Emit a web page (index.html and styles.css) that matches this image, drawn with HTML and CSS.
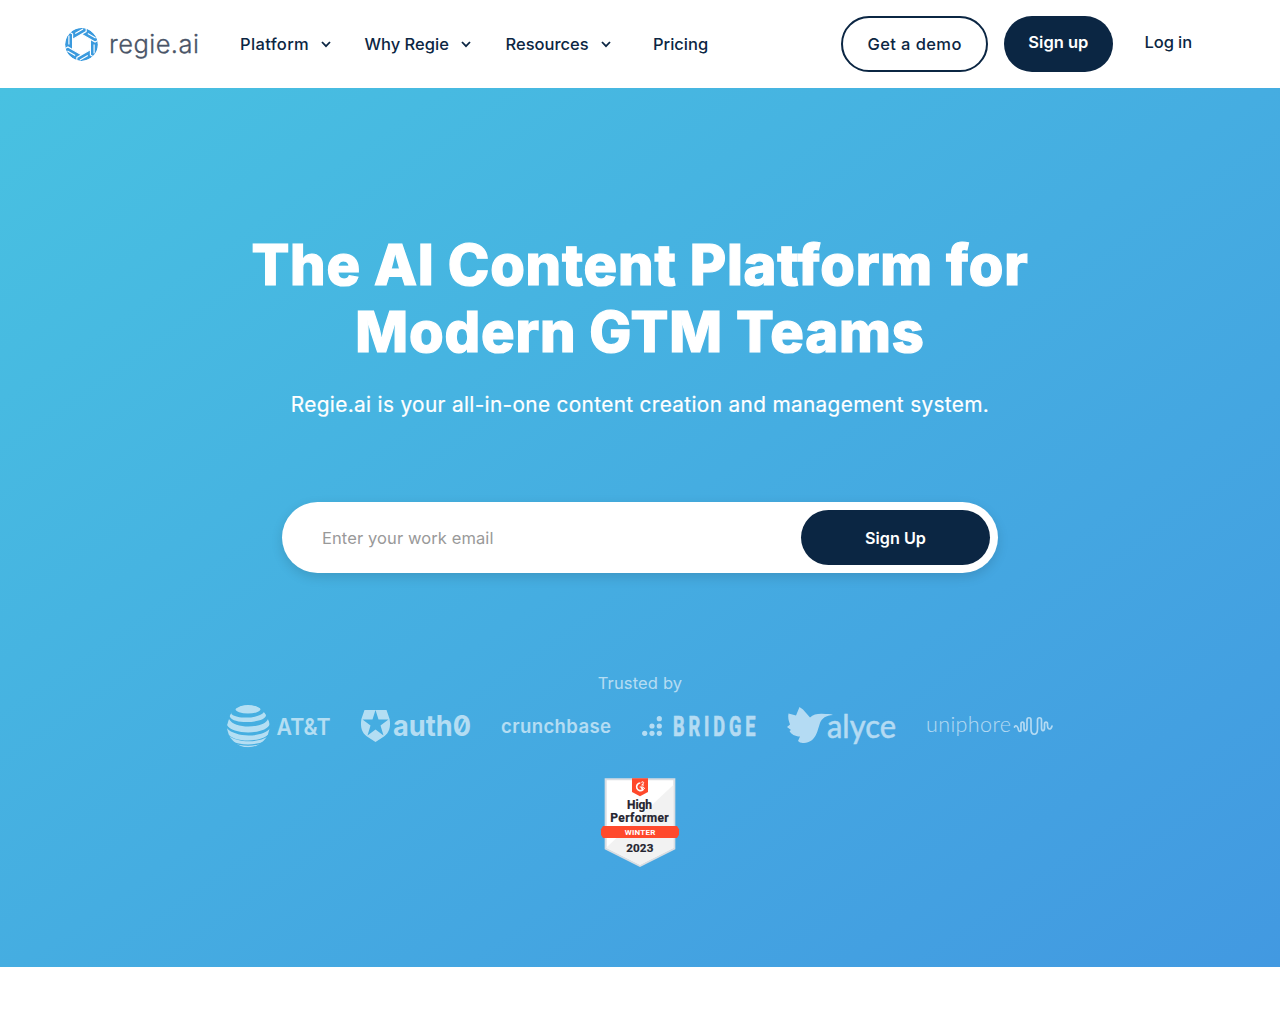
FILE: index.html
```
<!DOCTYPE html>
<html lang="en">
<head>
<meta charset="utf-8">
<title>Regie.ai</title>
<link rel="stylesheet" href="styles.css">
</head>
<body>
<header class="header">
  <a class="logo">
    <svg class="logo-mark" width="33" height="33" viewBox="-16.5 -16.5 33 33">
      <clipPath id="disc"><circle r="16.4"/></clipPath>
      <g clip-path="url(#disc)">
        <circle r="16.4" fill="#3a9ade"/>
        <path d="M0 -10.200 L8.800 -5.100 V5.100 L0 10.200 L-8.800 5.100 V-5.100Z" fill="#fff"/>
        <g fill="none" stroke="#fff" stroke-width="1.150">
          <path transform="rotate(30)" d="M-5 -8.900H10.500L13 -13M0 -12.600H9"/>
          <path transform="rotate(90)" d="M-5 -8.900H10.500L13 -13M0 -12.600H9"/>
          <path transform="rotate(150)" d="M-5 -8.900H10.500L13 -13M0 -12.600H9"/>
          <path transform="rotate(210)" d="M-5 -8.900H10.500L13 -13M0 -12.600H9"/>
          <path transform="rotate(270)" d="M-5 -8.900H10.500L13 -13M0 -12.600H9"/>
          <path transform="rotate(330)" d="M-5 -8.900H10.500L13 -13M0 -12.600H9"/>
        </g>
      </g>
    </svg>
    <span class="logo-text">regie.ai</span>
  </a>
  <nav class="nav">
    <a class="nav-item wide">Platform <svg class="chevron" viewBox="0 0 10 7"><path d="M1 1l4 4.200L9 1"/></svg></a>
    <a class="nav-item">Why Regie <svg class="chevron" viewBox="0 0 10 7"><path d="M1 1l4 4.200L9 1"/></svg></a>
    <a class="nav-item">Resources <svg class="chevron" viewBox="0 0 10 7"><path d="M1 1l4 4.200L9 1"/></svg></a>
    <a class="nav-item">Pricing</a>
  </nav>
  <div class="actions">
    <a class="btn btn-outline">Get a demo</a>
    <a class="btn btn-solid">Sign up</a>
    <a class="login">Log in</a>
  </div>
</header>
<main class="hero">
  <h1 class="title">The AI Content Platform for<br>Modern GTM Teams</h1>
  <p class="subtitle">Regie.ai is your all-in-one content creation and management system.</p>
  <form class="signup">
    <input class="email" type="email" placeholder="Enter your work email">
    <button class="submit" type="button">Sign Up</button>
  </form>
  <p class="trusted">Trusted by</p>
  <div class="brands">
    <svg width="103" height="46" viewBox="227 703 103 46">
      <clipPath id="globe"><circle cx="248.300" cy="726" r="21.300"/></clipPath>
      <g clip-path="url(#globe)">
        <ellipse cx="248" cy="709.300" rx="12.500" ry="4.200"/>
        <path d="M234 710 Q230 713 232 714.500 C237 719 259 719 264 712 L266 715 C266 723 234 725 230 717 L229 714Z"/>
        <path d="M229 719 C235 730 265 728 268 719 L270 724 C266 735 232 735 227 725Z"/>
        <path d="M226 727 C233 738 262 738 270 728.500 V733 C262 743 233 743 227 733Z"/>
        <path d="M228 735.500 C238 743 258 743 268 736.500 L265 741 C256 745.500 240 745.500 231 741Z"/>
        <path d="M233 743 C241 746.500 255 746.500 263 743 L260 746 C252 748 244 748 236 746Z"/>
      </g>
      <text x="276.500" y="734.500" font-family="Inter" font-weight="600" font-size="23" textLength="54" lengthAdjust="spacingAndGlyphs">AT&amp;T</text>
    </svg>
    <svg width="109" height="46" viewBox="362 703 109 46">
      <path fill-rule="evenodd" d="M365.500 710H387.500L390.600 719C392 727 390 733 385 736.500L376.500 742L368 736.500C363 733 361 727 362.400 719ZM376.500 710L373.500 719.500H363.500L371.500 725.500L368.500 735.500L376.500 729.500L384.500 735.500L381.500 725.500L389.500 719.500H379.500Z"/>
      <text class="auth0" x="394" y="736" font-family="Inter" font-weight="700" font-size="29" textLength="78" lengthAdjust="spacingAndGlyphs">auth0</text>
    </svg>
    <svg width="108" height="46" viewBox="503 703 108 46">
      <text x="502" y="733" font-family="Inter" font-weight="600" font-size="18.500" textLength="110">crunchbase</text>
    </svg>
    <svg width="113" height="46" viewBox="643 703 113 46">
      <circle cx="645.700" cy="733.300" r="2.600"/><circle cx="653" cy="733.300" r="2.600"/><circle cx="660.300" cy="733.300" r="2.600"/>
      <circle cx="653" cy="726" r="2.600"/><circle cx="660.300" cy="726" r="2.600"/><circle cx="660.300" cy="718.700" r="2.600"/>
      <text transform="translate(674 735.800) scale(.66 1)" font-family="Roboto" font-weight="700" font-size="27.500" textLength="125" stroke="#fff" stroke-width=".7">BRIDGE</text>
    </svg>
    <svg width="109" height="46" viewBox="787 703 109 46">
      <path d="M799.500 707 L803 709.500 L810 717.500 C813 714.500 817 713.700 822 713.800 C827 714 831 714 833 715 C826 715.500 822 718 820 723 C817 732 816 742 804 743 Q800 743.500 798 741 L800 736.500 C795 736.500 791 734 789.500 731 L791 730 L787 727 L790 724.500 Q787.500 718 788.500 713.500 L796 715.500Z"/>
      <text x="827" y="738" font-family="Lato" font-weight="400" font-size="32" textLength="69" lengthAdjust="spacingAndGlyphs" stroke="#fff" stroke-width=".5">alyce</text>
    </svg>
    <svg width="126" height="46" viewBox="927 703 126 46">
      <text x="926" y="731.500" font-family="Lato" font-weight="300" font-size="21.500" textLength="85">uniphore</text>
      <path d="M1014.500 727C1016 724 1018 727 1018.500 730C1019 732 1021 732 1021 730V724C1021 721.500 1024 721.500 1024 724V728C1024 731.500 1027 731.500 1027 728V720C1027 717 1031 717 1031 720V729C1031 736 1037.500 736 1037.500 729V720C1037.500 717 1041.500 717 1041.500 720V728C1041.500 731.500 1044.500 731.500 1044.500 728V724C1044.500 721.500 1047.500 721.500 1047.500 724V726C1048 730 1051 730 1052 726" fill="none" stroke="#fff" stroke-width="1.700" stroke-linecap="round"/>
    </svg>
  </div>
  <svg class="badge" width="80" height="90" viewBox="30 24 240 270">
    <path d="M44 25H256V238L150 291L44 238Z" fill="#d9dde2"/>
    <path d="M50 31H250V234L150 284L50 234Z" fill="#fff"/>
    <path d="M250 45V234L150 284L50 234V232Z" fill="#f2f2f2"/>
    <path d="M126 25H174V66L150 79L126 66Z" fill="#ff492c"/>
    <path d="M151 39A11.500 11.500 0 1 0 159 59L154 52" fill="none" stroke="#fff" stroke-width="5"/>
    <path d="M154 37Q161 33 161 38Q161 41 155 45H162M149 51H160L164 57" fill="none" stroke="#fff" stroke-width="3"/>
    <path d="M39 168H261L267 178V194L261 204H39L33 194V178Z" fill="#ff492c"/>
    <g font-family="Roboto" font-weight="700" fill="#252530" stroke="#252530" stroke-width=".6">
      <text x="111" y="118" font-size="36" textLength="75">High</text>
      <text x="61" y="156" font-size="36" textLength="175">Performer</text>
      <text x="109" y="247" font-size="35" textLength="81">2023</text>
    </g>
    <text x="104" y="195" font-family="Roboto" font-weight="700" font-size="24" fill="#fff" textLength="92">WINTER</text>
  </svg>
</main>
</body>
</html>
```
FILE: styles.css
```
body{margin:0;background:#fff;font-family:Inter,"Noto Sans",sans-serif;color:#0b2643}
.header{height:88px;display:flex;align-items:center;padding:0 88px 0 65px;box-sizing:border-box;font-size:16.5px;font-weight:500;line-height:24px}
.logo{width:175px;display:flex;align-items:center;gap:11px}
.logo-mark{flex:none}
.logo-text{font-size:25.5px;font-weight:300;letter-spacing:.45px;color:#4a5568;-webkit-text-stroke:.3px #4a5568}
.nav{display:grid;grid-template-columns:124.500px 141px 147.500px auto;letter-spacing:0}
.nav-item{display:flex;align-items:center;gap:12px;white-space:nowrap}
.wide{letter-spacing:.35px}
.chevron{width:10px;height:7px;fill:none;stroke:#0b2643;stroke-width:1.8}
.actions{display:flex;align-items:center;margin-left:auto;white-space:nowrap}
.btn{box-sizing:border-box;height:56px;border-radius:28px;display:flex;align-items:center;justify-content:center}
.btn-outline{width:147px;border:2px solid #0b2643;letter-spacing:.4px}
.btn-solid{width:108.500px;margin-left:16px;padding-bottom:4px;background:#0b2643;color:#fff;font-weight:600}
.login{margin-left:32px;padding-bottom:4px;letter-spacing:-.1px}
.hero{height:879px;box-sizing:border-box;padding-top:144px;background:linear-gradient(145deg,#48c1e1,#4299e1);display:flex;flex-direction:column;align-items:center;color:#fff}
.title{margin:0;font-size:56px;font-weight:800;line-height:67.2px;letter-spacing:.8px;text-align:center;-webkit-text-stroke:1.2px #fff}
.subtitle{margin:23px 0 0;font-size:20.8px;line-height:32px;letter-spacing:.34px;white-space:nowrap;-webkit-text-stroke:.2px #fff}
.signup{width:716px;height:70.500px;box-sizing:border-box;margin:81px 0 0;padding:8px 8px 8px 40px;border-radius:36px;background:#fff;box-shadow:0 4px 12px rgba(0,0,0,.13);display:flex}
.email{flex:1;min-width:0;padding:0;border:0;outline:0;background:none;font:400 16.5px Inter,sans-serif;letter-spacing:.1px}
.email::placeholder{color:#999}
.submit{width:189px;border:0;border-radius:28px;background:#0b2643;color:#fff;font:600 16.200px Inter,sans-serif}
.trusted{margin:98px 0 0;font-size:16.5px;line-height:24px;letter-spacing:.15px;opacity:.6}
.brands{display:flex;gap:31.700px;margin-top:8px;opacity:.6;fill:#fff}
.brands svg{display:block;overflow:visible}
.auth0{font-feature-settings:"zero"}
.badge{margin-top:29px}
```
